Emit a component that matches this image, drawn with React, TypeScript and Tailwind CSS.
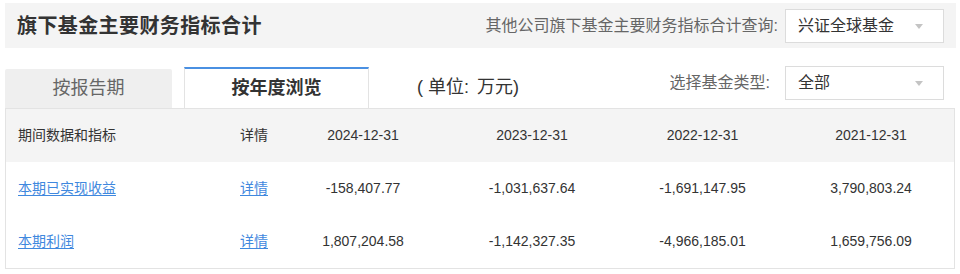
import React from "react";

const font = { fontFamily: '"Liberation Sans", "Noto Sans CJK SC", sans-serif' };

function Select({ value }: { value: string }) {
  return (
    <div className="relative flex h-[34px] w-[159px] items-center border border-[#dcdcdc] bg-white pl-[12px] text-[16px] text-[#333]">
      <span>{value}</span>
      <span className="absolute right-[20px] top-[14px] h-0 w-0 border-x-[4px] border-t-[5px] border-x-transparent border-t-[#c4c4c4]" />
    </div>
  );
}

const rows = [
  {
    name: "本期已实现收益",
    vals: ["-158,407.77", "-1,031,637.64", "-1,691,147.95", "3,790,803.24"],
  },
  {
    name: "本期利润",
    vals: ["1,807,204.58", "-1,142,327.35", "-4,966,185.01", "1,659,756.09"],
  },
];

const grid = "grid grid-cols-[222px_51px_168px_170px_171px_166px]";

export default function App() {
  return (
    <div className="h-[274px] w-[960px] bg-white pt-[3px]" style={font}>
      {/* header bar */}
      <div className="ml-[5px] flex h-[45px] w-[951px] items-center justify-between bg-[#f4f4f4] pl-[12px] pr-[12px]">
        <div className="text-[20px] font-bold tracking-[0.4px] text-[#333]">旗下基金主要财务指标合计</div>
        <div className="flex items-center gap-[7px]">
          <span className="text-[16px] text-[#666]">其他公司旗下基金主要财务指标合计查询:</span>
          <Select value="兴证全球基金" />
        </div>
      </div>

      {/* tabs row */}
      <div className="ml-[5px] mt-[19px] flex h-[41px] w-[950px] items-end pr-[11px]">
        <div className="flex h-[39px] w-[167px] items-center justify-center rounded-t-[2px] bg-[#efefef] text-[18px] text-[#666]">
          按报告期
        </div>
        <div className="ml-[12px] flex h-[41px] w-[185px] items-center justify-center border-x border-t-2 border-x-[#e3e3e3] border-t-[#4a90e2] bg-white text-[18px] font-bold text-[#333]">
          按年度浏览
        </div>
        <div className="ml-[48px] flex h-[41px] items-center text-[18px] text-[#333]">
          <span>(</span>
          <span className="ml-[5px]">单位:</span>
          <span className="ml-[8px]">万元)</span>
        </div>
        <div className="ml-auto -mt-[1px] flex items-center gap-[15px] self-start">
          <span className="text-[16px] text-[#666]">选择基金类型:</span>
          <Select value="全部" />
        </div>
      </div>

      {/* table */}
      <div className="ml-[5px] w-[950px] border border-[#e3e3e3]">
        <div className={`${grid} h-[53px] items-center bg-[#f4f4f4] text-[14px] text-[#333]`}>
          <div className="pl-[12px]">期间数据和指标</div>
          <div className="pl-[12px]">详情</div>
          <div className="text-center">2024-12-31</div>
          <div className="text-center">2023-12-31</div>
          <div className="text-center">2022-12-31</div>
          <div className="text-center">2021-12-31</div>
        </div>
        {rows.map((r) => (
          <div key={r.name} className={`${grid} h-[53px] items-center bg-white text-[14px] text-[#333]`}>
            <div className="pl-[12px]">
              <a className="cursor-pointer text-[#3f88de] underline underline-offset-2">{r.name}</a>
            </div>
            <div className="pl-[12px]">
              <a className="cursor-pointer text-[#3f88de] underline underline-offset-2">详情</a>
            </div>
            {r.vals.map((v, i) => (
              <div key={i} className="text-center">
                {v}
              </div>
            ))}
          </div>
        ))}
      </div>
    </div>
  );
}
